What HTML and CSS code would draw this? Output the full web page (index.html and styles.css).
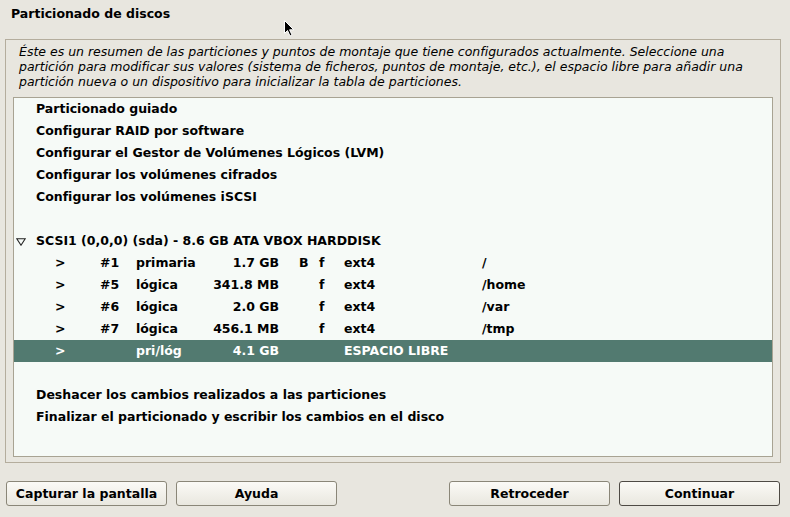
FILE: index.html
```html
<!DOCTYPE html>
<html lang="es">
<head>
<meta charset="utf-8">
<title>Particionado de discos</title>
<link rel="stylesheet" href="styles.css">
</head>
<body>
<div class="screen">
  <h1 class="title">Particionado de discos</h1>
  <div class="frame">
    <p class="desc">Éste es un resumen de las particiones y puntos de montaje que tiene configurados actualmente. Seleccione una<br>partición para modificar sus valores (sistema de ficheros, puntos de montaje, etc.), el espacio libre para añadir una<br>partición nueva o un dispositivo para inicializar la tabla de particiones.</p>
    <div class="list">
      <div class="row item">Particionado guiado</div>
      <div class="row item">Configurar RAID por software</div>
      <div class="row item">Configurar el Gestor de Volúmenes Lógicos (LVM)</div>
      <div class="row item">Configurar los volúmenes cifrados</div>
      <div class="row item">Configurar los volúmenes iSCSI</div>
      <div class="row"></div>
      <div class="row disk"><svg class="expander" width="10" height="8" viewBox="0 0 10 8"><path d="M0.8 0.8 H9.2 L5 7.2 Z" fill="none" stroke="#222" stroke-width="1.1"/></svg>SCSI1 (0,0,0) (sda) - 8.6 GB ATA VBOX HARDDISK</div>
      <div class="row part"><span>&gt;</span><span>#1</span><span>primaria</span><span class="size">1.7 GB</span><span></span><span>B</span><span>f</span><span>ext4</span><span>/</span></div>
      <div class="row part"><span>&gt;</span><span>#5</span><span>lógica</span><span class="size">341.8 MB</span><span></span><span></span><span>f</span><span>ext4</span><span>/home</span></div>
      <div class="row part"><span>&gt;</span><span>#6</span><span>lógica</span><span class="size">2.0 GB</span><span></span><span></span><span>f</span><span>ext4</span><span>/var</span></div>
      <div class="row part"><span>&gt;</span><span>#7</span><span>lógica</span><span class="size">456.1 MB</span><span></span><span></span><span>f</span><span>ext4</span><span>/tmp</span></div>
      <div class="row part selected"><span>&gt;</span><span></span><span>pri/lóg</span><span class="size">4.1 GB</span><span></span><span></span><span></span><span class="wide">ESPACIO LIBRE</span></div>
      <div class="row"></div>
      <div class="row item">Deshacer los cambios realizados a las particiones</div>
      <div class="row item">Finalizar el particionado y escribir los cambios en el disco</div>
    </div>
  </div>
  <div class="buttons">
    <button class="btn">Capturar la pantalla</button>
    <button class="btn">Ayuda</button>
    <span class="spacer"></span>
    <button class="btn">Retroceder</button>
    <button class="btn default">Continuar</button>
  </div>
  <svg class="cursor" width="11" height="17" viewBox="0 0 11 17"><path d="M0.5 0.5 V13.5 L3.5 10.5 L6 16 L8 15 L5.6 9.8 H9.8 Z" fill="#000" stroke="#fff" stroke-width="1"/></svg>
</div>
</body>
</html>
```
FILE: styles.css
```css
html, body {
  margin: 0;
  padding: 0;
}
body {
  background: #e8e6df;
  font-family: "DejaVu Sans", "Liberation Sans", sans-serif;
  color: #000;
}
.screen {
  position: relative;
  width: 790px;
  height: 517px;
  overflow: hidden;
}
.title {
  margin: 0;
  padding: 6px 11px 0;
  height: 39px;
  box-sizing: border-box;
  font-size: 12.5px;
  font-weight: bold;
  line-height: 16px;
}
.frame {
  margin: 0 9px 0 5px;
  height: 424px;
  box-sizing: border-box;
  border: 1px solid #b4ad9d;
  display: flex;
  flex-direction: column;
}
.desc {
  margin: 0;
  padding: 4px 0 0 13px;
  font-size: 12.5px;
  font-style: italic;
  line-height: 15px;
  height: 57px;
  box-sizing: border-box;
}
.list {
  margin: 0 7px 5px 7px;
  flex: 1;
  background: #f6faf7;
  border: 1px solid #a8a393;
  display: flex;
  flex-direction: column;
}
.row {
  height: 22px;
  line-height: 22px;
  font-size: 12.5px;
  font-weight: bold;
  white-space: nowrap;
  flex: none;
}
.list > .row:first-child {
  margin-top: 0;
}
.item {
  padding-left: 22px;
}
.disk {
  padding-left: 2px;
  display: flex;
  align-items: center;
}
.expander {
  margin-right: 10px;
  margin-top: 1px;
}
.part {
  display: grid;
  grid-template-columns: 45px 36px 74px 69px 20px 20px 25px 138px 1fr;
  padding-left: 41px;
}
.part .size {
  text-align: right;
}
.part .wide {
  grid-column: span 2;
}
.selected {
  background: #527a70;
  color: #fff;
}
.buttons {
  display: flex;
  gap: 9px;
  margin: 18px 10px 0 6px;
}
.spacer {
  flex: 1;
}
.btn {
  width: 161px;
  height: 25px;
  padding: 0;
  font-family: "DejaVu Sans", "Liberation Sans", sans-serif;
  font-size: 12.5px;
  font-weight: bold;
  color: #000;
  border: 1px solid #8a8678;
  border-radius: 3px;
  background: linear-gradient(#fbfaf6, #e9e7df);
}
.btn.default {
  border-color: #4e4a44;
}
.cursor {
  position: absolute;
  left: 284px;
  top: 20px;
}
```
